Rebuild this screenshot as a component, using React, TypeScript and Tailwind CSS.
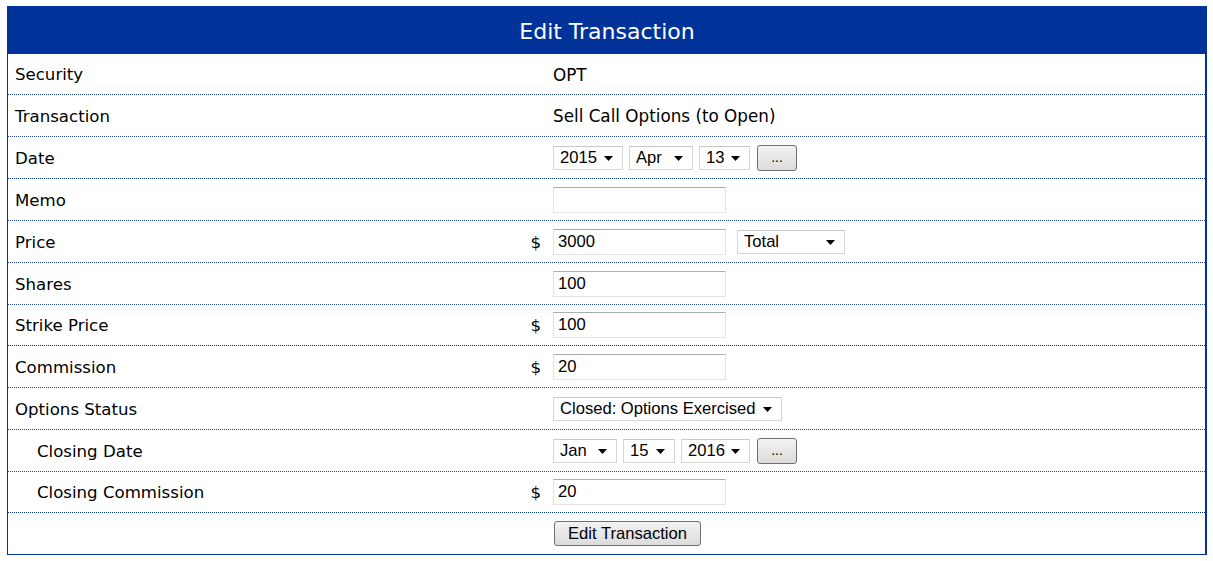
import React from "react"

const labelFont = "font-['DejaVu_Sans',Verdana,sans-serif]"
const ctlFont = "font-['Liberation_Sans',Arial,sans-serif]"

function Caret() {
  return (
    <svg width="9" height="5" viewBox="0 0 9 5" className="shrink-0">
      <path d="M0 0H9L4.5 5Z" fill="#000" />
    </svg>
  )
}

function FakeSelect({ value, width }: { value: string; width: string }) {
  return (
    <div
      className={`${width} ${ctlFont} h-[24px] flex items-center justify-between pl-[6px] pr-[9px] pt-px bg-white border border-[#d6d6d6] border-t-[#c9c9c9] text-[16.6px] text-black leading-none`}
    >
      <span>{value}</span>
      <Caret />
    </div>
  )
}

function TextBox({ value }: { value?: string }) {
  return (
    <div
      className={`${ctlFont} w-[173px] h-[26px] flex items-center px-[4px] pt-px bg-white border border-[#e3e3e3] border-t-[#abadb3] text-[16.6px] text-black leading-none`}
    >
      {value}
    </div>
  )
}

function DotsButton() {
  return (
    <button
      className={`${ctlFont} ml-px w-[40px] h-[26px] rounded-[3px] border border-[#707070] bg-gradient-to-b from-[#f2f2f2] to-[#dcdcdc] text-[14px] text-black leading-none pb-[2px]`}
    >
      ...
    </button>
  )
}

type Row = {
  label: string
  indent?: boolean
  dollar?: boolean
  h: string
  strong?: boolean
  value: React.ReactNode
}

const rows: Row[] = [
  { label: "Security", h: "h-[41px]", value: <span className={`${labelFont} pt-[3px] text-[16.8px]`}>OPT</span> },
  {
    label: "Transaction",
    h: "h-[42px]",
    value: <span className={`${labelFont} pt-[3px] text-[16.8px]`}>Sell Call Options (to Open)</span>,
  },
  {
    label: "Date",
    h: "h-[42px]",
    strong: true,
    value: (
      <div className="flex items-center gap-[6px]">
        <FakeSelect value="2015" width="w-[70px]" />
        <FakeSelect value="Apr" width="w-[64px]" />
        <FakeSelect value="13" width="w-[51px]" />
        <DotsButton />
      </div>
    ),
  },
  { label: "Memo", h: "h-[42px]", value: <TextBox /> },
  {
    label: "Price",
    dollar: true,
    h: "h-[42px]",
    value: (
      <div className="flex items-center gap-[11px]">
        <TextBox value="3000" />
        <FakeSelect value="Total" width="w-[108px]" />
      </div>
    ),
  },
  { label: "Shares", h: "h-[42px]", value: <TextBox value="100" /> },
  { label: "Strike Price", dollar: true, h: "h-[41px]", strong: true, value: <TextBox value="100" /> },
  { label: "Commission", dollar: true, h: "h-[42px]", value: <TextBox value="20" /> },
  {
    label: "Options Status",
    h: "h-[42px]",
    value: <FakeSelect value="Closed: Options Exercised" width="w-[229px]" />,
  },
  {
    label: "Closing Date",
    indent: true,
    h: "h-[42px]",
    value: (
      <div className="flex items-center gap-[6px]">
        <FakeSelect value="Jan" width="w-[64px]" />
        <FakeSelect value="15" width="w-[52px]" />
        <FakeSelect value="2016" width="w-[69px]" />
        <DotsButton />
      </div>
    ),
  },
  { label: "Closing Commission", indent: true, dollar: true, h: "h-[41px]", strong: true, value: <TextBox value="20" /> },
]

export default function App() {
  return (
    <div className="min-h-screen bg-white pt-[6px] pl-[7px]">
      <div className="w-[1200px]">
        <div
          className={`${labelFont} h-[48px] pt-[2px] bg-[#003399] text-white text-[22px] flex items-center justify-center`}
        >
          Edit Transaction
        </div>
        <div className="border-l border-r-2 border-b border-[#003399] text-[16.6px] text-black">
          {rows.map((row) => (
            <div
              key={row.label}
              className={`${row.h} grid grid-cols-[515px_30px_1fr] items-center border-b border-dotted ${
                row.strong ? "border-[#002a80]" : "border-[#2a4a9a]"
              }`}
            >
              <div className={`${labelFont} pt-[3px] ${row.indent ? "pl-[29px]" : "pl-[7px]"}`}>{row.label}</div>
              <div className={`${labelFont} pt-[3px] text-right pr-[12px]`}>{row.dollar ? "$" : ""}</div>
              <div className="flex items-center">{row.value}</div>
            </div>
          ))}
          <div className="h-[41px] grid grid-cols-[515px_30px_1fr] items-center">
            <div />
            <div />
            <div>
              <button
                className={`${ctlFont} ml-px w-[147px] h-[25px] rounded-[3px] border border-[#707070] bg-gradient-to-b from-[#f2f2f2] to-[#dcdcdc] text-[16.6px] text-black leading-none`}
              >
                Edit Transaction
              </button>
            </div>
          </div>
        </div>
      </div>
    </div>
  )
}
